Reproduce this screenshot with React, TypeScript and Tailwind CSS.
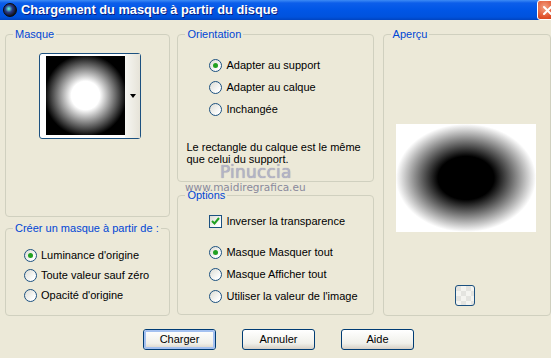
import React from 'react';

const font = { fontFamily: '"Liberation Sans", Arial, sans-serif' };

function Radio({ label, checked }: { label: string; checked?: boolean }) {
    return (
        <div className="flex items-center h-full">
            <span className="relative flex items-center justify-center w-[13px] h-[13px] rounded-full border border-[#1C5180] bg-[linear-gradient(135deg,#DCDCD4,#FFFFFF_80%)] shrink-0">
                {checked && <span className="w-[5px] h-[5px] rounded-full bg-[#21A121]" />}
            </span>
            <span className="ml-[4px] text-black">{label}</span>
        </div>
    );
}

function Group({ title, className, children }: { title: string; className: string; children?: React.ReactNode }) {
    return (
        <div className={`relative border border-[#D0D0BF] rounded-[4px] ${className}`}>
            <span className="absolute -top-[7px] left-[7px] px-[2px] bg-[#ECE9D8] text-[#0046D5] leading-[13px]">{title}</span>
            {children}
        </div>
    );
}

function Button({ label, primary }: { label: string; primary?: boolean }) {
    return (
        <div className="w-[73px] h-[21px] rounded-[3px] border border-[#003C74] bg-[linear-gradient(to_bottom,#FFFFFF,#F0F0EA_70%,#D6D0C5)] flex items-center justify-center">
            <div className={`w-full h-full rounded-[2px] flex items-center justify-center ${primary ? 'border-2 border-[#A4C1F0]' : ''}`}>
                {label}
            </div>
        </div>
    );
}

export default function App() {
    return (
        <div className="relative w-[551px] h-[358px] overflow-hidden bg-[#ECE9D8] text-[11px] text-black" style={font}>
            {/* title bar */}
            <div className="h-[20px] flex items-center bg-[linear-gradient(to_bottom,#3D8BF5_0%,#0C5EEA_15%,#0056E6_50%,#0052DD_85%,#0044C0_100%)]">
                <div className="ml-[3px] w-[14px] h-[14px] rounded-full bg-[radial-gradient(circle_at_40%_40%,#6fd_0%,#2a3a8a_35%,#101010_75%)] border border-[#0a0a0a]" />
                <span className="ml-[4px] text-white font-bold text-[12.8px] [text-shadow:1px_1px_0_#0A1E80]">
                    Chargement du masque à partir du disque
                </span>
                <div className="ml-auto mr-[-7px] w-[21px] h-[20px] rounded-[3px] border border-white bg-[radial-gradient(circle_at_35%_35%,#F2A184,#E0502A_60%,#C23A12)] flex items-center justify-center">
                    <svg width="11" height="11" viewBox="0 0 11 11">
                        <path d="M2 2 L9 9 M9 2 L2 9" stroke="white" strokeWidth="2" strokeLinecap="round" />
                    </svg>
                </div>
            </div>

            {/* groups */}
            <div className="flex pl-[5px] pt-[14px]">
                <div className="flex flex-col w-[167px]">
                    <Group title="Masque" className="h-[183px]">
                        <div className="ml-[33px] mt-[18px] w-[102px] h-[86px] rounded-[3px] border border-[#1C5180] bg-white flex">
                            <div className="ml-[6px] mt-[2px] w-[79px] h-[79px] bg-[radial-gradient(circle_closest-side,#FFFFFF_36%,#000000_104%)]" />
                            <div className="flex-1 flex items-center justify-center bg-[linear-gradient(to_right,#F6F6F2,#E6E3D8)]">
                                <svg width="6" height="4" viewBox="0 0 6 4"><path d="M0 0 H6 L3 4 Z" fill="black" /></svg>
                            </div>
                        </div>
                    </Group>
                    <Group title="Créer un masque à partir de :" className="mt-[11px] h-[88px]">
                        <div className="pl-[18px] pt-[16px] flex flex-col">
                            <div className="h-[20px]"><Radio label="Luminance d'origine" checked /></div>
                            <div className="h-[20px]"><Radio label="Toute valeur sauf zéro" /></div>
                            <div className="h-[20px]"><Radio label="Opacité d'origine" /></div>
                        </div>
                    </Group>
                </div>

                <div className="flex flex-col w-[198px] ml-[7px]">
                    <Group title="Orientation" className="h-[148px]">
                        <div className="pl-[31px] pt-[19px] flex flex-col">
                            <div className="h-[22px]"><Radio label="Adapter au support" checked /></div>
                            <div className="h-[22px]"><Radio label="Adapter au calque" /></div>
                            <div className="h-[22px]"><Radio label="Inchangée" /></div>
                        </div>
                        <p className="mt-[21px] pl-[8px] leading-[12px]">
                            Le rectangle du calque est le même<br />que celui du support.
                        </p>
                    </Group>
                    <Group title="Options" className="mt-[13px] h-[120px]">
                        <div className="pl-[31px] pt-[14px] flex flex-col">
                            <div className="h-[22px] flex items-center">
                                <span className="w-[13px] h-[13px] border border-[#1C5180] bg-[linear-gradient(135deg,#DCDCD4,#FFFFFF_80%)] flex items-center justify-center">
                                    <svg width="9" height="8" viewBox="0 0 9 8">
                                        <path d="M1 4 L3.5 6.5 L8 1" stroke="#21A121" strokeWidth="2" fill="none" />
                                    </svg>
                                </span>
                                <span className="ml-[4px]">Inverser la transparence</span>
                            </div>
                            <div className="h-[22px] mt-[9px]"><Radio label="Masque Masquer tout" checked /></div>
                            <div className="h-[22px]"><Radio label="Masque Afficher tout" /></div>
                            <div className="h-[22px]"><Radio label="Utiliser la valeur de l'image" /></div>
                        </div>
                    </Group>
                </div>

                <div className="ml-[9px] w-[170px]">
                    <Group title="Aperçu" className="h-[282px]">
                        <div className="ml-[12px] mt-[89px] w-[140px] h-[108px] bg-[radial-gradient(ellipse_closest-side,#000000_40%,#FFFFFF_100%)]" />
                        <div className="ml-[71px] mt-[53px] w-[20px] h-[21px] rounded-[3px] border border-[#1C5180] bg-[conic-gradient(#F4F4F0_25%,#E4E4E0_0_50%,#F4F4F0_0_75%,#E4E4E0_0)] bg-[length:10px_10px]" />
                    </Group>
                </div>
            </div>

            {/* buttons */}
            <div className="flex pl-[143px] mt-[13px] gap-[26px]">
                <Button label="Charger" primary />
                <Button label="Annuler" />
                <Button label="Aide" />
            </div>

            {/* watermark */}
            <div className="absolute left-[220px] top-[163px] text-[17px] leading-[18px] tracking-[0.2px] text-[#B4B4C6] [text-shadow:0_0_1px_#8E8EA2]" style={{ fontFamily: '"DejaVu Sans", sans-serif' }}>
                Pinuccia
            </div>
            <div className="absolute left-[185px] top-[181px] text-[10.5px] leading-[12px] text-[#8A8A9C]" style={{ fontFamily: '"DejaVu Sans", sans-serif' }}>
                www.maidiregrafica.eu
            </div>
        </div>
    );
}
